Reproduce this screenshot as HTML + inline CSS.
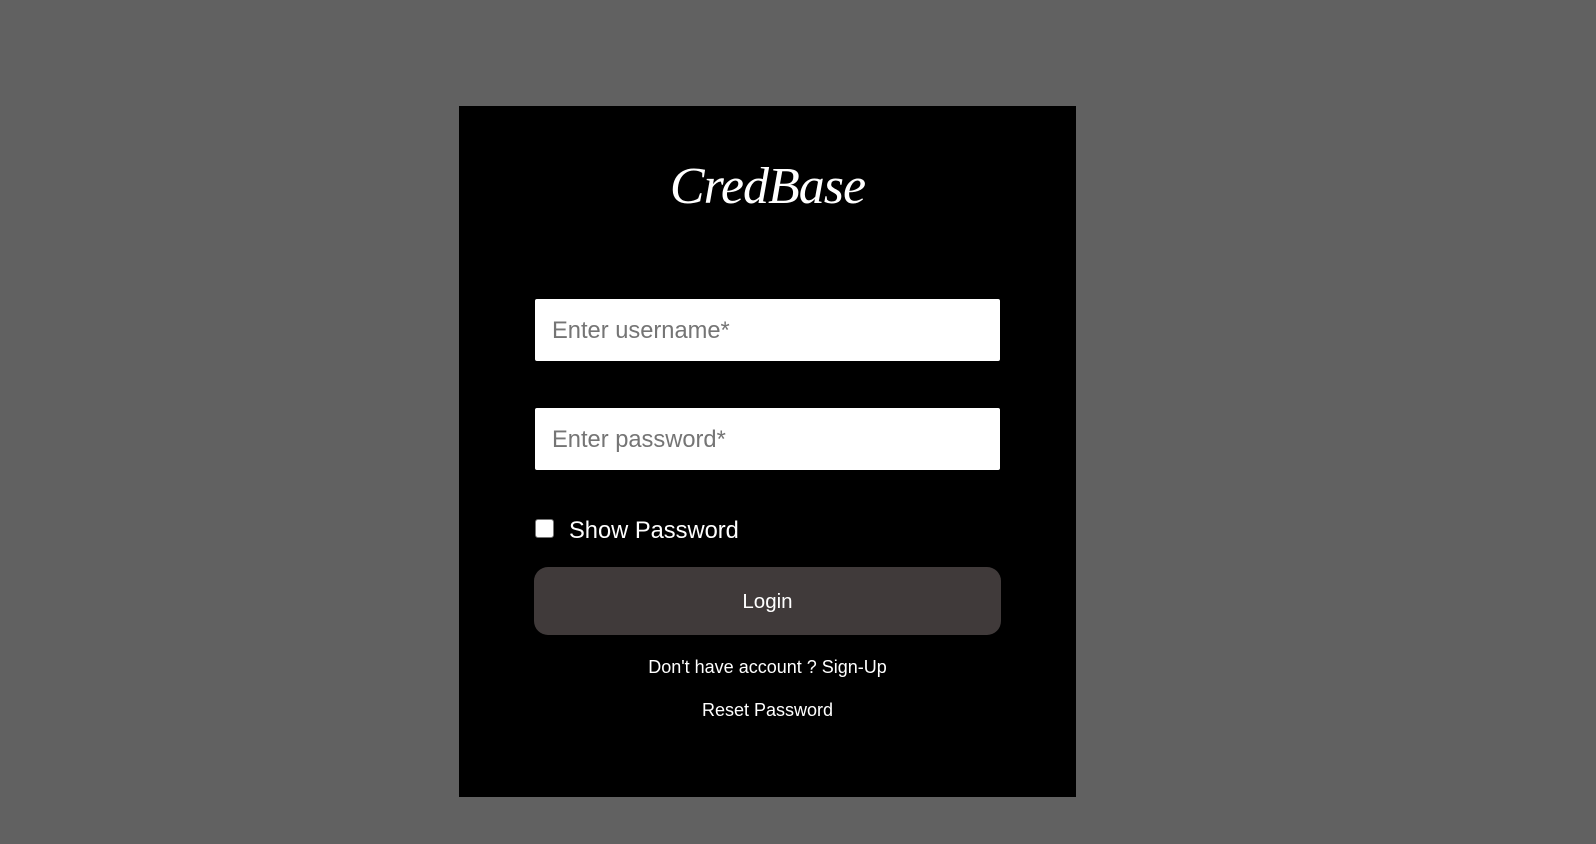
<!DOCTYPE html>
<html><head><style>
html,body{margin:0;padding:0;width:1596px;height:844px;background:#616161;overflow:hidden;font-family:"Liberation Sans",Arial,sans-serif;}
.card{position:absolute;left:459px;top:106px;width:617px;height:691px;background:#000;}
.logo{position:absolute;left:0;width:617px;top:157px;text-align:center;color:#fff;font-family:"Liberation Serif",serif;font-style:italic;font-size:52px;line-height:60px;letter-spacing:-1px;}
.inp{position:absolute;left:535px;width:465px;height:62px;background:#fff;border-radius:2px;box-sizing:border-box;padding-left:17px;font-size:23.7px;line-height:64px;color:#757575;}
.cb{position:absolute;left:535px;top:519px;width:17px;height:17px;border:1px solid #767676;border-radius:3px;background:#fff;}
.sp{position:absolute;left:569px;top:517px;color:#fff;font-size:23.7px;line-height:28px;}
.btn{position:absolute;left:534px;top:567px;width:467px;height:68px;background:#403a3a;border-radius:14px;color:#fff;font-size:20.5px;line-height:70px;text-align:center;}
.lnk{position:absolute;left:459px;width:617px;text-align:center;color:#fff;font-size:18px;line-height:20px;}
</style></head><body>
<div class="card"></div>
<div class="logo" style="left:459px">CredBase</div>
<div class="inp" style="top:299px">Enter username*</div>
<div class="inp" style="top:408px">Enter password*</div>
<div class="cb"></div>
<div class="sp">Show Password</div>
<div class="btn">Login</div>
<div class="lnk" style="top:657px">Don't have account ? Sign-Up</div>
<div class="lnk" style="top:700px">Reset Password</div>
</body></html>
